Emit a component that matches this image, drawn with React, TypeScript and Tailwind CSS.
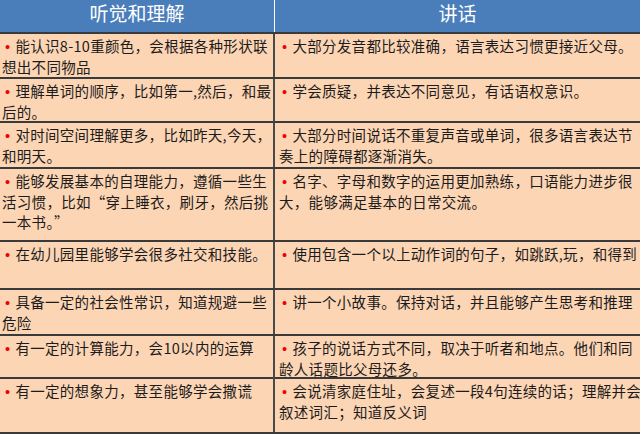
const rows: { h: string; left: string[]; right: string[] }[] = [
  {
    h: 'h-[45px]',
    left: ['能认识8-10重颜色，会根据各种形状联', '想出不同物品'],
    right: ['大部分发音都比较准确，语言表达习惯更接近父母。'],
  },
  {
    h: 'h-[44px]',
    left: ['理解单词的顺序，比如第一,然后，和最', '后的。'],
    right: ['学会质疑，并表达不同意见，有话语权意识。'],
  },
  {
    h: 'h-[46px]',
    left: ['对时间空间理解更多，比如昨天,今天，', '和明天。'],
    right: ['大部分时间说话不重复声音或单词，很多语言表达节', '奏上的障碍都逐渐消失。'],
  },
  {
    h: 'h-[73px]',
    left: ['能够发展基本的自理能力，遵循一些生', '活习惯，比如“穿上睡衣，刷牙，然后挑', '一本书。”'],
    right: ['名字、字母和数字的运用更加熟练，口语能力进步很', '大，能够满足基本的日常交流。'],
  },
  {
    h: 'h-[48px]',
    left: ['在幼儿园里能够学会很多社交和技能。'],
    right: ['使用包含一个以上动作词的句子，如跳跃,玩，和得到'],
  },
  {
    h: 'h-[46px]',
    left: ['具备一定的社会性常识，知道规避一些', '危险'],
    right: ['讲一个小故事。保持对话，并且能够产生思考和推理'],
  },
  {
    h: 'h-[43px]',
    left: ['有一定的计算能力，会10以内的运算'],
    right: ['孩子的说话方式不同，取决于听者和地点。他们和同', '龄人话题比父母还多。'],
  },
  {
    h: 'h-[55px]',
    left: ['有一定的想象力，甚至能够学会撒谎'],
    right: ['会说清家庭住址，会复述一段4句连续的话；理解并会', '叙述词汇；知道反义词'],
  },
]

function Cell({ lines, className }: { lines: string[]; className?: string }) {
  return (
    <div
      className={`pl-[2px] pt-[2px] text-[14.5px] leading-[20px] tracking-[0.3px] text-[#1c1c1c] ${className ?? ''}`}
    >
      {lines.map((line, i) => (
        <div key={i} className="whitespace-nowrap">
          {i === 0 && (
            <span className="font-['Liberation_Sans'] text-[#f00000] pl-[3px] pr-[5px]">•</span>
          )}
          {line}
        </div>
      ))}
    </div>
  )
}

export default function App() {
  return (
    <div className="w-[640px] h-[434px] overflow-hidden bg-[#fcd5b4] font-['Noto_Sans_CJK_SC',sans-serif]">
      <div className="grid grid-cols-[275px_1fr] h-[32px] bg-[#4a7ebb] text-white text-[19px] leading-[25px]">
        <div className="text-center border-r border-white">听觉和理解</div>
        <div className="text-center">讲话</div>
      </div>
      {rows.map((row, i) => (
        <div
          key={i}
          className={`grid grid-cols-[275px_1fr] border-t-2 border-[#3a3a3a] ${row.h}`}
        >
          <Cell lines={row.left} className="border-r-2 border-[#4a4a4a]" />
          <Cell lines={row.right} className="pl-[4px]" />
        </div>
      ))}
      <div className="border-t-2 border-[#3a3a3a]" />
    </div>
  )
}
